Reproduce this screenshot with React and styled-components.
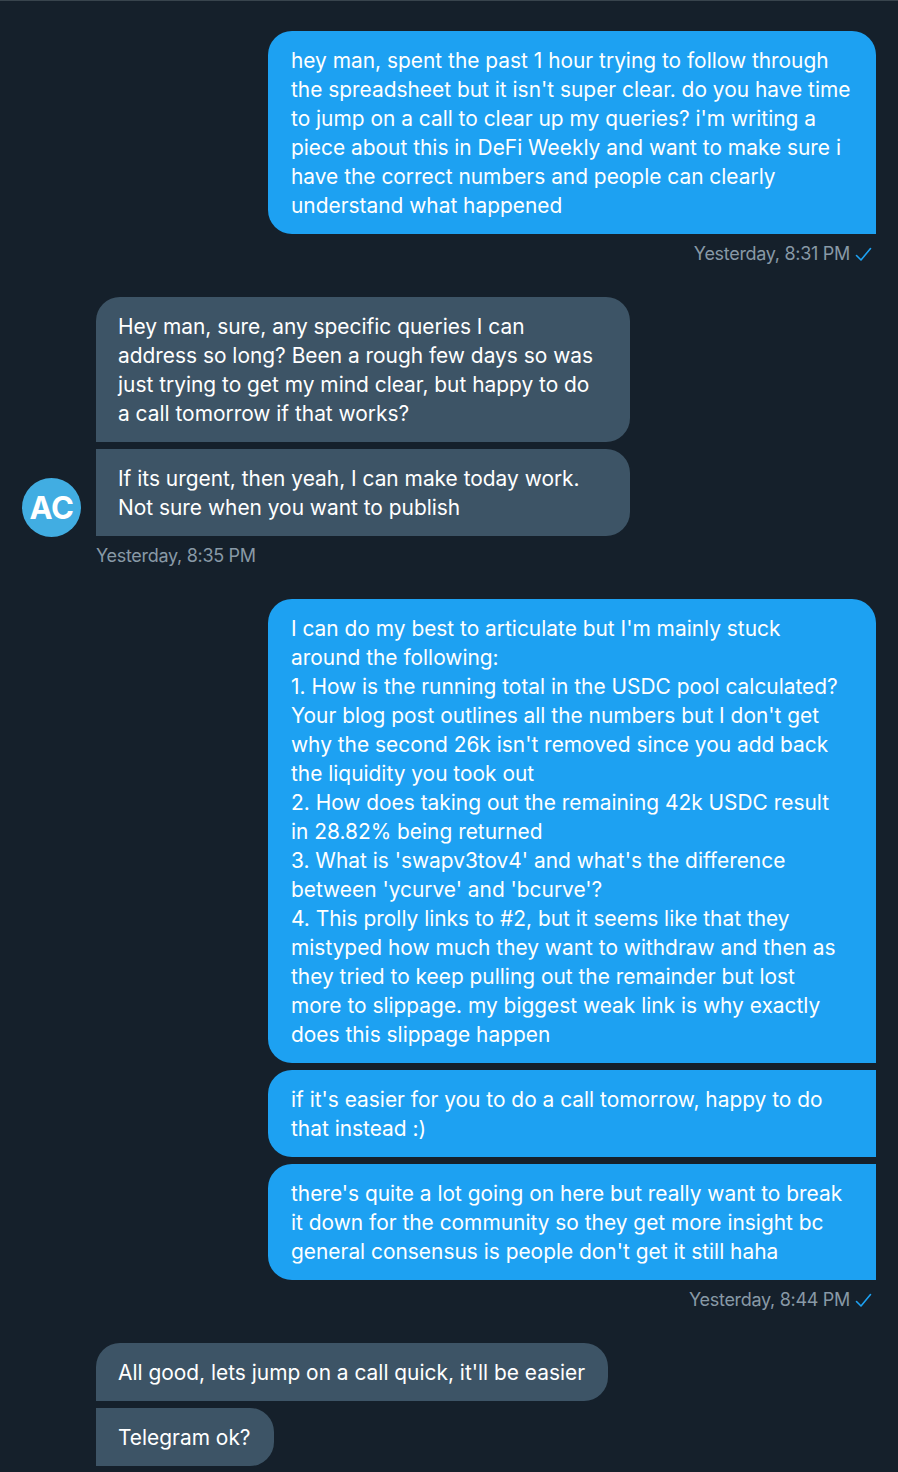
import React from 'react';
import styled, { createGlobalStyle, css } from 'styled-components';

const GlobalStyle = createGlobalStyle`
  body {
    margin: 0;
    background-color: #15202b;
    font-family: Inter, "Noto Sans", sans-serif;
  }
`;

const Page = styled.div`
  display: flex;
  flex-flow: column;
  gap: 33px;
  min-height: 1472px;
  box-sizing: border-box;
  padding: 30px 22px 0 22px;
  border-top: 1px solid #38444d;
  background-color: #15202b;
`;

const Group = styled.div`
  display: flex;
  flex-flow: column;
  align-items: ${p => (p.$out ? 'flex-end' : 'flex-start')};
  padding-left: ${p => p.$indent || 0};
`;

const Row = styled.div`
  display: flex;
  align-items: flex-end;
  gap: 15px;
`;

const Stack = styled.div`
  display: flex;
  flex-flow: column;
  align-items: ${p => (p.$out ? 'flex-end' : 'flex-start')};
  gap: 7px;
`;

const Avatar = styled.div`
  display: flex;
  align-items: center;
  justify-content: center;
  flex-shrink: 0;
  width: 59px;
  height: 59px;
  margin-bottom: -1px;
  border-radius: 50%;
  background-color: #41ade2;
  color: white;
  font-size: 31px;
  font-weight: 700;
  letter-spacing: -0.5px;
`;

const radius = (out, pos) => {
  const r = '24px';
  const first = pos === 'first';
  if (out) {
    return css`
      border-radius: ${r} ${first ? r : 0} 0 ${r};
    `;
  }
  return css`
    border-radius: ${first ? r : 0} ${r} ${r} 0;
  `;
};

const Bubble = styled.div`
  box-sizing: border-box;
  width: ${p => p.$width || 'auto'};
  padding: ${p => (p.$out ? '15px 23px 14px 23px' : '15px 23px 14px 22px')};
  background-color: ${p => (p.$out ? '#1da1f2' : '#3d5466')};
  color: white;
  font-size: 20.9px;
  line-height: 29px;
  white-space: pre;
  ${p => radius(p.$out, p.$pos)}
`;

const Meta = styled.div`
  display: flex;
  align-items: center;
  gap: 5px;
  margin-top: 10px;
  padding-left: ${p => (p.$out ? 0 : '74px')};
  padding-right: ${p => (p.$out ? '4px' : 0)};
  color: #8899a6;
  font-size: 18px;
  line-height: 20px;
  letter-spacing: -0.3px;
`;

const Check = () => (
  <svg width="17" height="15" viewBox="0 0 17 15" fill="none">
    <path d="M1.5 8.5 L6 13 L15.5 1.5" stroke="#1da1f2" strokeWidth="1.6" strokeLinecap="round" strokeLinejoin="round" />
  </svg>
);

const lines = (...l) => l.join('\n');

const Outgoing = ({ messages, time }) => (
  <Group $out>
    <Stack $out>
      {messages.map((m, i) => (
        <Bubble key={i} $out $width="608px" $pos={i === 0 ? 'first' : 'next'}>
          {m}
        </Bubble>
      ))}
    </Stack>
    <Meta $out>
      {time}
      <Check />
    </Meta>
  </Group>
);

const Incoming = ({ messages, time, avatar, width }) => (
  <Group>
    <Row>
      <Avatar>{avatar}</Avatar>
      <Stack>
        {messages.map((m, i) => (
          <Bubble key={i} $width={width} $pos={i === 0 ? 'first' : 'next'}>
            {m}
          </Bubble>
        ))}
      </Stack>
    </Row>
    {time && <Meta>{time}</Meta>}
  </Group>
);

export default function App() {
  return (
    <>
      <GlobalStyle />
      <Page>
        <Outgoing
          time="Yesterday, 8:31 PM"
          messages={[
            lines(
              'hey man, spent the past 1 hour trying to follow through',
              "the spreadsheet but it isn't super clear. do you have time",
              "to jump on a call to clear up my queries? i'm writing a",
              'piece about this in DeFi Weekly and want to make sure i',
              'have the correct numbers and people can clearly',
              'understand what happened'
            ),
          ]}
        />
        <Incoming
          avatar="AC"
          width="534px"
          time="Yesterday, 8:35 PM"
          messages={[
            lines(
              'Hey man, sure, any specific queries I can',
              'address so long? Been a rough few days so was',
              'just trying to get my mind clear, but happy to do',
              'a call tomorrow if that works?'
            ),
            lines(
              'If its urgent, then yeah, I can make today work.',
              'Not sure when you want to publish'
            ),
          ]}
        />
        <Outgoing
          time="Yesterday, 8:44 PM"
          messages={[
            lines(
              "I can do my best to articulate but I'm mainly stuck",
              'around the following:',
              '1. How is the running total in the USDC pool calculated?',
              "Your blog post outlines all the numbers but I don't get",
              "why the second 26k isn't removed since you add back",
              'the liquidity you took out',
              '2. How does taking out the remaining 42k USDC result',
              'in 28.82% being returned',
              "3. What is 'swapv3tov4' and what's the difference",
              "between 'ycurve' and 'bcurve'?",
              '4. This prolly links to #2, but it seems like that they',
              'mistyped how much they want to withdraw and then as',
              'they tried to keep pulling out the remainder but lost',
              'more to slippage. my biggest weak link is why exactly',
              'does this slippage happen'
            ),
            lines(
              "if it's easier for you to do a call tomorrow, happy to do",
              'that instead :)'
            ),
            lines(
              "there's quite a lot going on here but really want to break",
              'it down for the community so they get more insight bc',
              "general consensus is people don't get it still haha"
            ),
          ]}
        />
        <Group $indent="74px">
          <Stack>
            <Bubble $pos="first">All good, lets jump on a call quick, it'll be easier</Bubble>
            <Bubble $pos="next">Telegram ok?</Bubble>
          </Stack>
        </Group>
      </Page>
    </>
  );
}
